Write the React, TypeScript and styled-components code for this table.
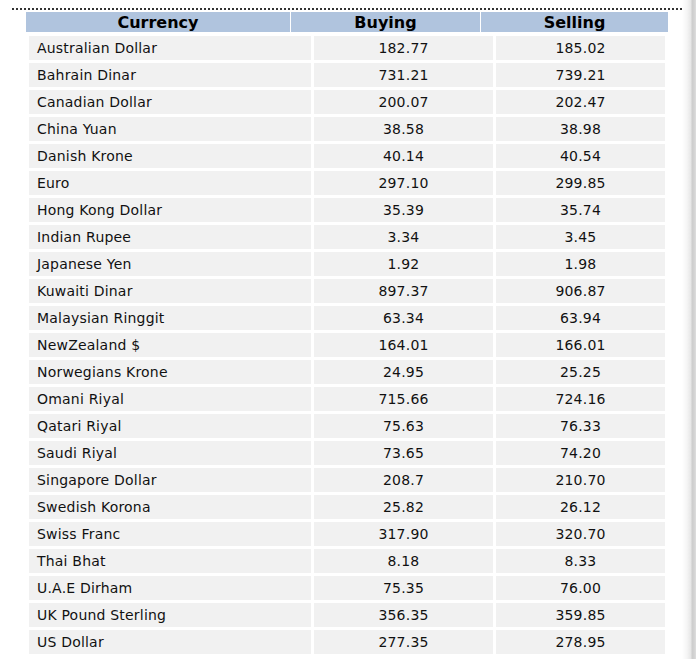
import * as React from 'react';
import styled, { createGlobalStyle } from 'styled-components';

const GlobalStyle = createGlobalStyle`
  html, body {
    margin: 0;
    padding: 0;
    background: #fff;
  }
  body {
    font-family: 'DejaVu Sans', Verdana, sans-serif;
    color: #111;
  }
`;

const Page = styled.div`
  display: flex;
  height: 659px;
  overflow: hidden;
`;

const Main = styled.div`
  flex: 1;
  padding: 8px 0 0 12px;
`;

const EdgeShadow = styled.div`
  width: 14px;
  flex-shrink: 0;
  background: linear-gradient(
    to right,
    #fff 0,
    #f5f5f5 5px,
    #e6e6e6 9px,
    #cdcdcd 10px,
    #d2d2d2 12px,
    #dedede 14px
  );
`;

const Rule = styled.div`
  border-top: 2px dotted #333;
`;

const RateTable = styled.div`
  width: 642px;
  margin: 2px 0 0 14px;
`;

const HeaderRow = styled.div`
  display: grid;
  grid-template-columns: 264px 189px 187px;
  column-gap: 1px;
  height: 20px;
`;

const HeaderCell = styled.div`
  background: #b0c4de;
  font-weight: bold;
  font-size: 16px;
  line-height: 19px;
  padding-top: 1px;
  text-align: center;
  color: #000;
`;

const Body = styled.div`
  margin-top: 1px;
  padding: 3px;
  display: grid;
  grid-template-columns: 282px 179px 169px;
  grid-auto-rows: 24px;
  gap: 3px;
`;

const Cell = styled.div<{ $align?: 'left' | 'center' }>`
  background: #f1f1f1;
  font-size: 14px;
  line-height: 23px;
  padding-top: 1px;
  letter-spacing: 0.2px;
  white-space: nowrap;
  text-align: ${(p) => p.$align ?? 'center'};
  padding-left: ${(p) => (p.$align === 'left' ? '8px' : '0')};
`;

const rates: ReadonlyArray<[string, string, string]> = [
  ['Australian Dollar', '182.77', '185.02'],
  ['Bahrain Dinar', '731.21', '739.21'],
  ['Canadian Dollar', '200.07', '202.47'],
  ['China Yuan', '38.58', '38.98'],
  ['Danish Krone', '40.14', '40.54'],
  ['Euro', '297.10', '299.85'],
  ['Hong Kong Dollar', '35.39', '35.74'],
  ['Indian Rupee', '3.34', '3.45'],
  ['Japanese Yen', '1.92', '1.98'],
  ['Kuwaiti Dinar', '897.37', '906.87'],
  ['Malaysian Ringgit', '63.34', '63.94'],
  ['NewZealand $', '164.01', '166.01'],
  ['Norwegians Krone', '24.95', '25.25'],
  ['Omani Riyal', '715.66', '724.16'],
  ['Qatari Riyal', '75.63', '76.33'],
  ['Saudi Riyal', '73.65', '74.20'],
  ['Singapore Dollar', '208.7', '210.70'],
  ['Swedish Korona', '25.82', '26.12'],
  ['Swiss Franc', '317.90', '320.70'],
  ['Thai Bhat', '8.18', '8.33'],
  ['U.A.E Dirham', '75.35', '76.00'],
  ['UK Pound Sterling', '356.35', '359.85'],
  ['US Dollar', '277.35', '278.95'],
];

export default function App() {
  return (
    <>
      <GlobalStyle />
      <Page>
        <Main>
          <Rule />
          <RateTable>
            <HeaderRow>
              <HeaderCell>Currency</HeaderCell>
              <HeaderCell>Buying</HeaderCell>
              <HeaderCell>Selling</HeaderCell>
            </HeaderRow>
            <Body>
              {rates.map(([name, buying, selling]) => (
                <React.Fragment key={name}>
                  <Cell $align="left">{name}</Cell>
                  <Cell>{buying}</Cell>
                  <Cell>{selling}</Cell>
                </React.Fragment>
              ))}
            </Body>
          </RateTable>
        </Main>
        <EdgeShadow />
      </Page>
    </>
  );
}
